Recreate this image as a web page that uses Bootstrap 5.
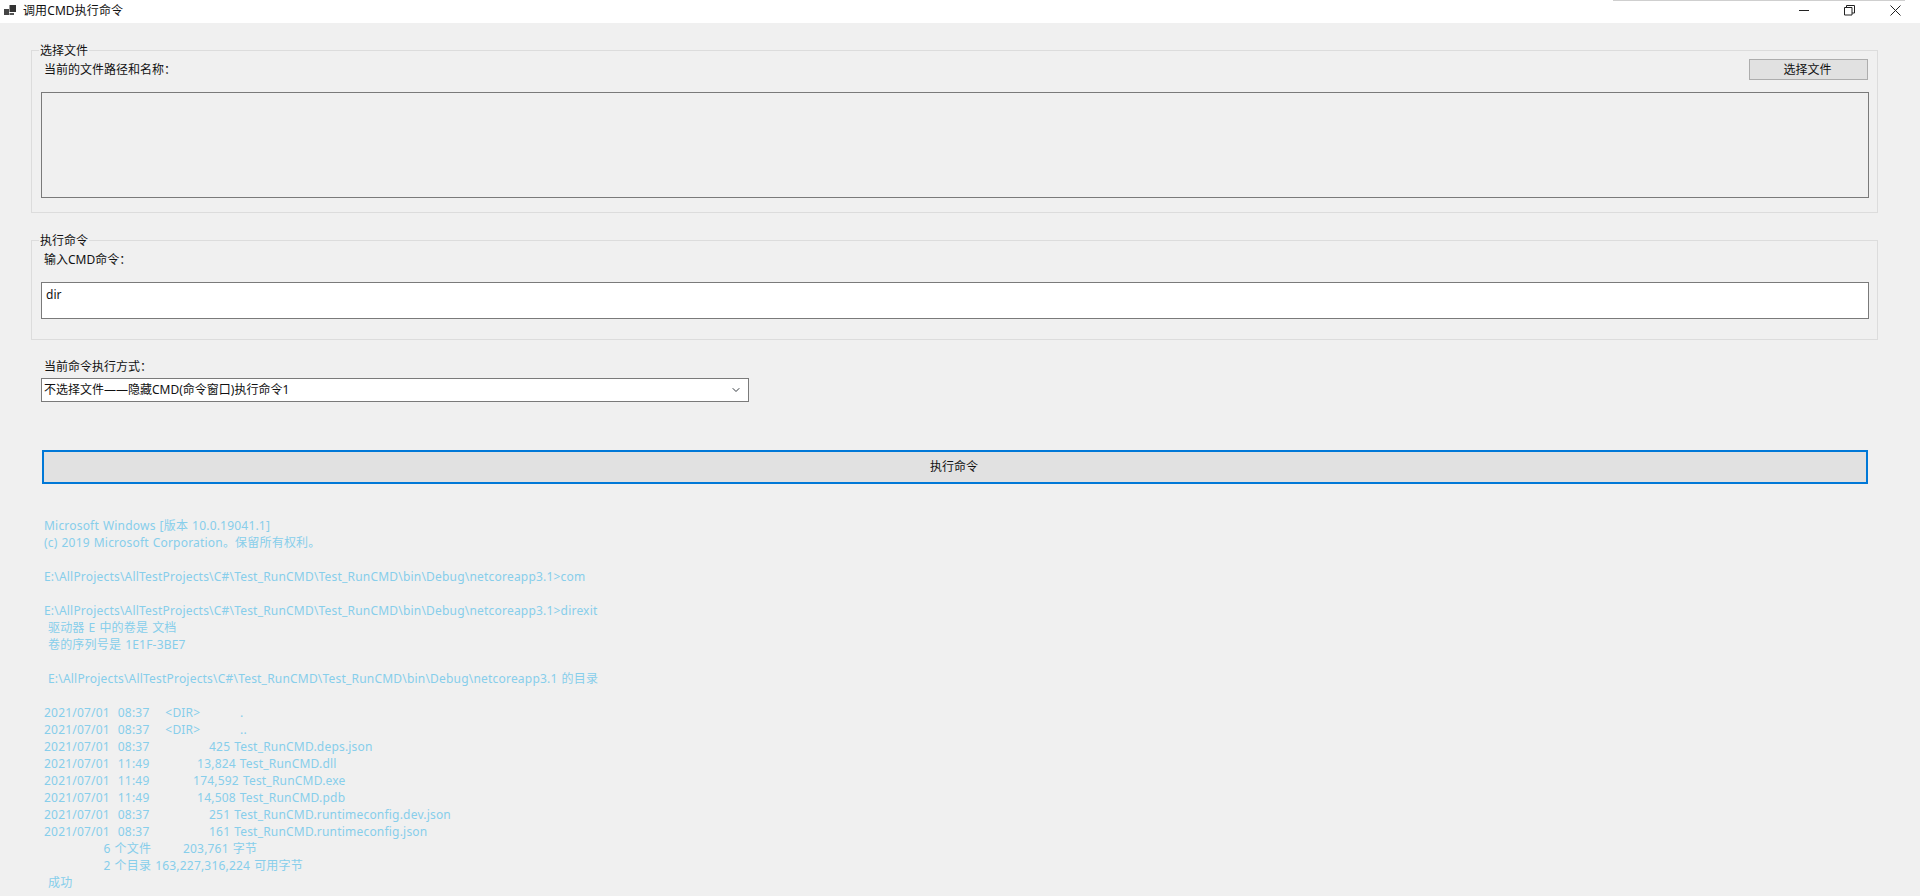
<!DOCTYPE html>
<html lang="zh-CN">
<head>
<meta charset="utf-8">
<title>调用CMD执行命令</title>
<link href="https://cdn.jsdelivr.net/npm/bootstrap@5.3.0/dist/css/bootstrap.min.css" rel="stylesheet">
<style>
html,body{height:896px;overflow:hidden}
body{background:#f0f0f0;color:#111;font:12px/16px "Noto Sans","Noto Sans CJK SC",sans-serif}
.title-strip{height:23px;background:#fff;padding:0 2px 0 4px}
.title-text{margin-left:6px;line-height:20px;letter-spacing:.1px;position:relative;top:1px}
.top-sliver{position:absolute;left:1613px;top:0;width:292px;height:1px;background:#cfcfcf}
.win-btn{width:45.5px;height:20px}
.win-pane{padding:0 42px 0 31px}
.grp{border:1px solid #dcdcdc;padding:0 8px 14px 9px;margin:19px 0 0;min-width:0}
.grp legend{float:none;width:auto;font-size:12px;line-height:16px;margin:0 0 0 -2px;padding:0 1px;color:#111;position:relative;top:1px}
.grp-second{margin-top:19px;padding-bottom:20px}
.file-btn{width:119px;height:21px;margin:1px 1px 0 0;padding:0 2px 0 0;font-size:12px;line-height:19px;background:#e1e1e1;border:1px solid #adadad;border-radius:0;color:#111}
.cap{padding-left:3px;padding-top:4px}
.path-box,.cmd-box{display:block;width:100%;border:1px solid #7a7a7a;border-radius:0;font-size:12px;line-height:16px;color:#111;box-shadow:none}
.path-box{height:106px;margin-top:12px;background:#f0f0f0}
.cmd-box{height:37px;margin-top:14px;background:#fff;padding:3px 4px 16px}
.mode-label{margin:19px 0 3px 13px}
.mode-pick{width:708px;height:24px;margin-left:10px;border:1px solid #7a7a7a;border-radius:0;padding:0 20px 0 2px;font-size:12px;line-height:20px;color:#111;background-size:12px 8px;background-position:right 6px center}
.run-btn{display:block;width:1826px;height:34px;margin:48px 0 0 11px;padding:0 2px 0 0;background:#e1e1e1;border:2px solid #0078d7;border-radius:0;font-size:12px;color:#111}
.console-out{margin:33px 0 0 13px;color:#87ceeb;line-height:17px;white-space:pre;letter-spacing:.2px;word-spacing:.65px}
</style>
</head>
<body>
<div class="top-sliver"></div>
<div class="title-strip d-flex align-items-start justify-content-between">
  <div class="d-flex align-items-center" style="height:20px">
    <svg width="13" height="12" viewBox="0 0 13 12"><rect x="0" y="5" width="5" height="6" fill="#444"/><rect x="5.5" y="1" width="6.5" height="7" fill="#333"/><rect x="5.5" y="9" width="4.5" height="2" fill="#555"/></svg>
    <span class="title-text">调用CMD执行命令</span>
  </div>
  <div class="d-flex">
    <div class="win-btn d-flex align-items-center justify-content-center"><svg width="11" height="11" viewBox="0 0 11 11"><path d="M0 5.5H10" stroke="#222" fill="none"/></svg></div>
    <div class="win-btn d-flex align-items-center justify-content-center"><svg width="11" height="11" viewBox="0 0 11 11"><path d="M.5 2.5h7.5v7.5H.5zM2.5 2.5V.5H10.5V8H8" stroke="#222" fill="none"/></svg></div>
    <div class="win-btn d-flex align-items-center justify-content-center"><svg width="11" height="11" viewBox="0 0 11 11"><path d="M.5.5L10.5 10.5M10.5.5L.5 10.5" stroke="#222" fill="none"/></svg></div>
  </div>
</div>
<div class="win-pane">
  <fieldset class="grp">
    <legend>选择文件</legend>
    <div class="d-flex justify-content-between align-items-start">
      <span class="cap">当前的文件路径和名称：</span>
      <button type="button" class="btn file-btn">选择文件</button>
    </div>
    <div class="path-box"></div>
  </fieldset>
  <fieldset class="grp grp-second">
    <legend>执行命令</legend>
    <div class="cap">输入CMD命令：</div>
    <input type="text" class="form-control cmd-box" value="dir">
  </fieldset>
  <div class="mode-label">当前命令执行方式：</div>
  <select class="form-select mode-pick"><option>不选择文件——隐藏CMD(命令窗口)执行命令1</option></select>
  <button type="button" class="btn run-btn">执行命令</button>
  <div class="console-out">Microsoft Windows [版本 10.0.19041.1]
(c) 2019 Microsoft Corporation。保留所有权利。

E:\AllProjects\AllTestProjects\C#\Test_RunCMD\Test_RunCMD\bin\Debug\netcoreapp3.1&gt;com

E:\AllProjects\AllTestProjects\C#\Test_RunCMD\Test_RunCMD\bin\Debug\netcoreapp3.1&gt;direxit
 驱动器 E 中的卷是 文档
 卷的序列号是 1E1F-3BE7

 E:\AllProjects\AllTestProjects\C#\Test_RunCMD\Test_RunCMD\bin\Debug\netcoreapp3.1 的目录

2021/07/01  08:37    &lt;DIR&gt;          .
2021/07/01  08:37    &lt;DIR&gt;          ..
2021/07/01  08:37               425 Test_RunCMD.deps.json
2021/07/01  11:49            13,824 Test_RunCMD.dll
2021/07/01  11:49           174,592 Test_RunCMD.exe
2021/07/01  11:49            14,508 Test_RunCMD.pdb
2021/07/01  08:37               251 Test_RunCMD.runtimeconfig.dev.json
2021/07/01  08:37               161 Test_RunCMD.runtimeconfig.json
               6 个文件        203,761 字节
               2 个目录 163,227,316,224 可用字节
 成功</div>
</div>
<script src="https://cdn.jsdelivr.net/npm/bootstrap@5.3.0/dist/js/bootstrap.bundle.min.js"></script>
</body>
</html>
